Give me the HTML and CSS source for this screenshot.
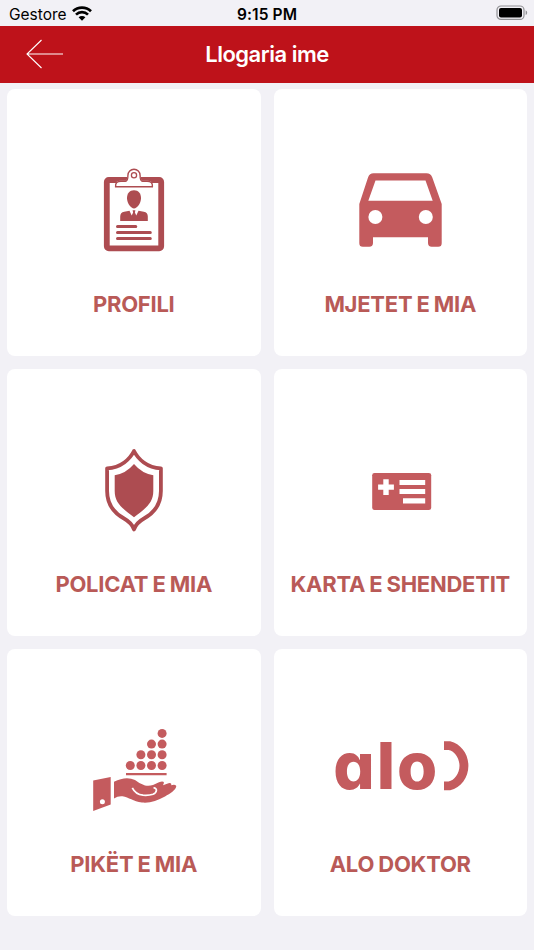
FILE: index.html
```
<!DOCTYPE html>
<html lang="sq">
<head>
    <meta charset="UTF-8">
    <meta name="viewport" content="width=device-width, initial-scale=1.0">
    <title>Llogaria ime</title>
    <link rel="stylesheet" href="styles.css">
</head>
<body>
    <div class="status-bar">
        <div class="carrier">
            <span>Gestore</span>
            <svg class="wifi" width="20" height="15" viewBox="0 0 20 15">
                <path d="M1 5.2a13 13 0 0 1 18 0M4 8.6a8.6 8.6 0 0 1 12 0" fill="none" stroke="#000" stroke-width="2.7"/>
                <path d="M6.6 11.3a4.8 4.8 0 0 1 6.8 0L10 14.7z"/>
            </svg>
        </div>
        <span class="time">9:15 PM</span>
        <svg class="battery" width="32" height="16" viewBox="0 0 32 16">
            <rect x="1" y="1" width="27" height="13.4" rx="4" fill="none" stroke="#919195" stroke-width="1.2"/>
            <rect x="3" y="3" width="23" height="9.4" rx="2"/>
            <path d="M29.6 5.3q1.6.8 1.6 2.4t-1.6 2.4z" fill="#919195"/>
        </svg>
    </div>

    <header class="navbar">
        <a class="back" href="#" aria-label="Kthehu">
            <svg width="38" height="30" viewBox="0 0 38 30">
                <path d="M15.5 1L1 15l14.5 14M1 15h36" fill="none" stroke="#fff" stroke-width="1.1"/>
            </svg>
        </a>
        <h1>Llogaria ime</h1>
    </header>

    <main class="menu">
        <a class="card" href="#">
            <svg class="icon dark" viewBox="0 0 100 100">
                <rect x="22.8" y="20" width="54.4" height="68.3" rx="2" fill="none" stroke="currentColor" stroke-width="5.8"/>
                <path d="M31 27.5v-1.3q0-5.4 6-5.4h5q1.2 0 1.2-5.3a7 7 0 0 1 13.6 0q0 5.3 1.2 5.3h5q6 0 6 5.4v1.3z" fill="#fff"/>
                <path d="M31.6 26.8q-.5-5.6 5.4-5.6h4.5q2.4 0 2.4-5.8a6.1 6.1 0 0 1 12.2 0q0 5.8 2.4 5.8h4.5q5.9 0 5.4 5.6z" fill="#fff" stroke="currentColor" stroke-width="1.4"/>
                <circle cx="50" cy="15.3" r="2.6" fill="none" stroke="currentColor" stroke-width="1.3"/>
                <path d="M50 30.3c4.5 0 7 3.2 7 8 0 5-4 10.2-7 10.2s-7-5.2-7-10.2c0-4.8 2.5-8 7-8z"/>
                <path d="M36.2 61v-4.5q0-4 4-4.8l5.3-1 2.2 4.7 1.4-3-.5-2.2h2.8l-.5 2.2 1.4 3 2.2-4.7 5.3 1q4 .8 4 4.8V61z"/>
                <path d="M33.5 66.5h18.300M33.5 72.5h32.800M33.5 78.4h32.800" stroke="currentColor" stroke-width="3" stroke-linecap="round"/>
            </svg>
            <span class="label">PROFILI</span>
        </a>

        <a class="card" href="#">
            <svg class="icon" viewBox="0 0 100 100">
                <path fill-rule="evenodd" d="M23.5 13.3h53q4.2 0 5.7 4L91.7 44v39.3q0 3.5-3.5 3.5h-6.5q-3.7 0-3.7-3.7v-5.8H23v5.8q0 3.7-3.7 3.7h-6.5q-3.5 0-3.5-3.5V44l8.800-26.7q1.4-4 5.400-4zM25.5 20.6L18.3 40.8h64.4L75.5 20.6z"/>
                <circle cx="25.4" cy="57" r="7" fill="#fff"/>
                <circle cx="75.8" cy="57" r="7" fill="#fff"/>
            </svg>
            <span class="label">MJETET E MIA</span>
        </a>

        <a class="card" href="#">
            <svg class="icon dark" viewBox="0 0 100 100">
                <path d="M50 11C46 19 37 27.8 23.1 28.3V51C23.1 65 30 73 40 78.5Q48 83 50 89.5Q52 83 60 78.5C70 73 76.9 65 76.9 51V28.3C63 27.8 54 19 50 11z" fill="none" stroke="currentColor" stroke-width="3.8" stroke-linejoin="round"/>
                <path d="M50 24Q42 33.5 30.7 35.2V51C30.7 63 38 68 50 77.2C62 68 69.3 63 69.3 51V35.2Q58 33.5 50 24z"/>
            </svg>
            <span class="label">POLICAT E MIA</span>
        </a>

        <a class="card" href="#">
            <svg class="icon" viewBox="0 -10 100 100">
                <rect x="22.2" y="23" width="59" height="37" rx="2.3"/>
                <path d="M33.3 29.2h5.4v5.2h5.2v5.4h-5.2V45h-5.4v-5.2h-5.2v-5.4h5.2zM49.5 30h25.7v5H49.5zM49.5 39h25.7v5H49.5zM53 48.2h22.2v5.2H53z" fill="#fff"/>
            </svg>
            <span class="label">KARTA E SHENDETIT</span>
        </a>

        <a class="card" href="#">
            <svg class="icon" viewBox="0 0 100 100">
                <g>
                    <circle cx="46.3" cy="45.5" r="4.5"/>
                    <circle cx="56.9" cy="45.5" r="4.5"/>
                    <circle cx="67.5" cy="45.5" r="4.5"/>
                    <circle cx="78.1" cy="45.5" r="4.5"/>
                    <circle cx="56.9" cy="34.8" r="4.5"/>
                    <circle cx="67.5" cy="34.8" r="4.5"/>
                    <circle cx="78.1" cy="34.8" r="4.5"/>
                    <circle cx="67.5" cy="24.1" r="4.5"/>
                    <circle cx="78.1" cy="24.1" r="4.5"/>
                    <circle cx="78.1" cy="13.4" r="4.5"/>
                </g>
                <path d="M42 53h40.6v2.3H42z"/>
                <path d="M9.2 60.5L26.7 57v27.5L9.2 91z"/>
                <circle cx="18.4" cy="81.8" r="2.5" fill="#fff"/>
                <path d="M30 61.8Q42 55.5 51 60Q55 63.5 61 65.4Q65 66.2 69 65L75 62.2Q79.5 60.7 80 62.8L79 65.3L84.5 63.2Q87.6 62.4 87.4 65.2Q91 64 92.3 66C92 70 86 73.5 81 76.5C73 81 66 83.2 58 82.5C49 81.5 45 77.3 38.5 76.3Q34 75.8 30 78.4z"/>
                <path d="M48.3 67.8Q51.5 74.3 59 75.2Q65 75.6 69 74.3C73.5 72.5 73.4 67.5 69.5 68" fill="none" stroke="#fff" stroke-width="1.7"/>
            </svg>
            <span class="label">PIKËT E MIA</span>
        </a>

        <a class="card" href="#">
            <span class="alo-logo">
                <span class="alo-text">alo</span>
                <svg width="26" height="50" viewBox="0 0 26 50">
                    <path d="M0 .3h6.200C17 3 24.4 13 24.4 24.800S17 46.600 6.200 49.300H0v-8.800h4.500c6-1 11-8 11-15.700S10.500 10 4.500 9H0z"/>
                </svg>
            </span>
            <span class="label">ALO DOKTOR</span>
        </a>
    </main>
</body>
</html>
```
FILE: styles.css
```
* {
    margin: 0;
    padding: 0;
    box-sizing: border-box;
}

body {
    min-height: 100vh;
    background: #f2f1f6;
    font-family: Inter, 'Liberation Sans', sans-serif;
}

a {
    color: inherit;
    text-decoration: none;
}

.status-bar {
    display: grid;
    grid-template-columns: 1fr auto 1fr;
    align-items: center;
    height: 26px;
    padding: 2px 6px 0;
    font-size: 15.5px;
}

.carrier {
    display: flex;
    align-items: center;
    gap: 5px;
    padding-left: 3px;
}

.time {
    font-weight: 600;
    letter-spacing: 0.1px;
}

.wifi,
.battery {
    margin-top: -2px;
}

.battery {
    justify-self: end;
}

.navbar {
    display: grid;
    grid-template-columns: 1fr auto 1fr;
    align-items: center;
    height: 56.5px;
    padding: 0 26px 1px;
    background: #be121a;
    color: #fff;
}

.back {
    display: flex;
}

h1 {
    font-size: 22px;
    font-weight: 600;
    letter-spacing: -0.5px;
}

.menu {
    display: grid;
    grid-template-columns: 1fr 1fr;
    grid-auto-rows: 267px;
    gap: 13px;
    padding: 6.5px 7px;
}

.card {
    display: flex;
    flex-direction: column;
    align-items: center;
    padding-top: 71px;
    background: #fff;
    border-radius: 8px;
    color: #c45b5e;
}

.icon {
    width: 100px;
    height: 100px;
    fill: currentColor;
}

.dark {
    color: #ad4c51;
}

.label {
    margin-top: 30px;
    font-size: 22px;
    line-height: 28px;
    font-weight: 650;
    letter-spacing: -0.25px;
    word-spacing: -0.8px;
    color: #b95a57;
    white-space: nowrap;
}

.alo-logo {
    display: flex;
    align-items: center;
    justify-content: center;
    gap: 5px;
    height: 100px;
    padding: 0 0 9px 3px;
    fill: currentColor;
}

.alo-text {
    font-size: 65px;
    line-height: 50px;
    font-weight: 800;
    letter-spacing: 2px;
    font-feature-settings: "cv11";
}
```
